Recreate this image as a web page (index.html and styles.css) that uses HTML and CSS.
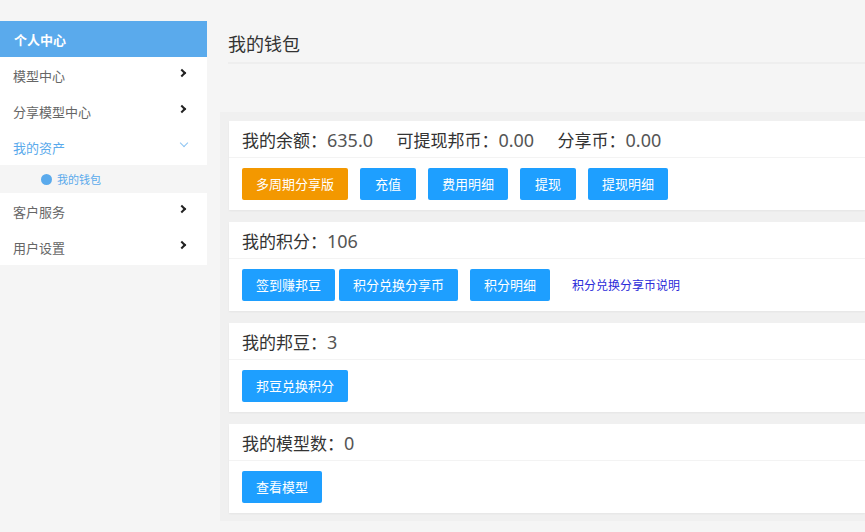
FILE: index.html
```html
<!DOCTYPE html>
<html>
    <head>
        <meta charset="utf-8">
        <title>我的钱包</title>
        <link rel="stylesheet" href="styles.css">
    </head>
    <body>
        <div class="page">
            <div class="side">
                <div class="side_title">个人中心</div>
                <div class="menu_item">模型中心<span class="arrow"></span></div>
                <div class="menu_item">分享模型中心<span class="arrow"></span></div>
                <div class="menu_item open">我的资产<span class="arrow down"></span></div>
                <div class="sub_item"><span class="dot"></span>我的钱包</div>
                <div class="menu_item">客户服务<span class="arrow"></span></div>
                <div class="menu_item">用户设置<span class="arrow"></span></div>
            </div>
            <div class="main">
                <div class="main_title">我的钱包</div>
                <div class="cards">
                    <div class="card">
                        <div class="card_head">
                            <span class="stat">我的余额：<span class="num">635.0</span></span>
                            <span class="stat">可提现邦币：<span class="num">0.00</span></span>
                            <span class="stat">分享币：<span class="num">0.00</span></span>
                        </div>
                        <div class="card_body">
                            <a class="btn warm">多周期分享版</a>
                            <a class="btn">充值</a>
                            <a class="btn">费用明细</a>
                            <a class="btn">提现</a>
                            <a class="btn">提现明细</a>
                        </div>
                    </div>
                    <div class="card">
                        <div class="card_head">
                            <span class="stat">我的积分：<span class="num">106</span></span>
                        </div>
                        <div class="card_body">
                            <a class="btn tight">签到赚邦豆</a><a class="btn">积分兑换分享币</a>
                            <a class="btn">积分明细</a>
                            <a class="link">积分兑换分享币说明</a>
                        </div>
                    </div>
                    <div class="card">
                        <div class="card_head">
                            <span class="stat">我的邦豆：<span class="num">3</span></span>
                        </div>
                        <div class="card_body">
                            <a class="btn">邦豆兑换积分</a>
                        </div>
                    </div>
                    <div class="card">
                        <div class="card_head">
                            <span class="stat">我的模型数：<span class="num">0</span></span>
                        </div>
                        <div class="card_body">
                            <a class="btn">查看模型</a>
                        </div>
                    </div>
                </div>
            </div>
        </div>
    </body>
</html>
```

FILE: styles.css
```css
* {
    box-sizing: border-box;
    font-family: "Noto Sans", "Noto Sans CJK SC", sans-serif;
}
body {
    margin: 0;
    background-color: #f5f5f5;
    height: 100vh;
    overflow: hidden;
}
.page {
    display: flex;
    align-items: flex-start;
}

/* left menu */
.side {
    width: 207px;
    margin-top: 21px;
    background-color: #fff;
    flex-shrink: 0;
}
.side_title {
    height: 36px;
    line-height: 38px;
    padding-left: 14px;
    background-color: #5aaaec;
    color: #fff;
    font-size: 13px;
    font-weight: bold;
}
.menu_item {
    position: relative;
    height: 36px;
    line-height: 38px;
    padding-left: 13px;
    font-size: 13px;
    color: #666;
}
.menu_item.open {
    color: #5aaaec;
}
.arrow {
    position: absolute;
    right: 22px;
    top: 13px;
    width: 6px;
    height: 6px;
    border-top: 2px solid #222;
    border-right: 2px solid #222;
    transform: rotate(45deg);
}
.arrow.down {
    top: 11px;
    right: 20px;
    border-color: #8cc4f2;
    border-width: 1px;
    transform: rotate(135deg);
}
.sub_item {
    height: 28px;
    padding-left: 41px;
    background-color: #f5f5f5;
    font-size: 11px;
    color: #5aaaec;
    display: flex;
    align-items: center;
}
.dot {
    width: 11px;
    height: 11px;
    border-radius: 50%;
    background-color: #5aaaec;
    margin-right: 5px;
}

/* right side */
.main {
    flex-grow: 1;
    padding-left: 13px;
}
.main_title {
    margin: 31px 0 0 8px;
    padding-bottom: 4px;
    font-size: 18px;
    line-height: 27px;
    color: #333;
    border-bottom: 2px solid #eee;
}
.cards {
    margin-top: 48px;
    background-color: #f0f0f0;
    padding: 9px 0 8px 9px;
}
.card {
    background-color: #fff;
    margin-bottom: 12px;
    box-shadow: 0 1px 2px rgba(0, 0, 0, 0.05);
}
.card:last-child {
    margin-bottom: 0;
}
.card_head {
    height: 37px;
    line-height: 38px;
    padding-left: 13px;
    border-bottom: 1px solid #f3f3f3;
    font-size: 17px;
    color: #333;
    white-space: nowrap;
}
.stat {
    margin-right: 19px;
}
.num {
    color: #555;
    font-size: 18px;
}
.card_body {
    padding: 10px 13px 10px;
    display: flex;
    align-items: center;
}
.btn {
    display: inline-block;
    height: 32px;
    line-height: 32px;
    padding: 0 14px;
    min-width: 56px;
    text-align: center;
    margin-right: 12px;
    background-color: #1e9fff;
    color: #fff;
    font-size: 13px;
    border-radius: 2px;
}
.btn.tight {
    margin-right: 4px;
}
.btn.warm {
    background-color: #f39800;
}
.link {
    margin-left: 10px;
    font-size: 12px;
    color: #2b2bd9;
}
```
